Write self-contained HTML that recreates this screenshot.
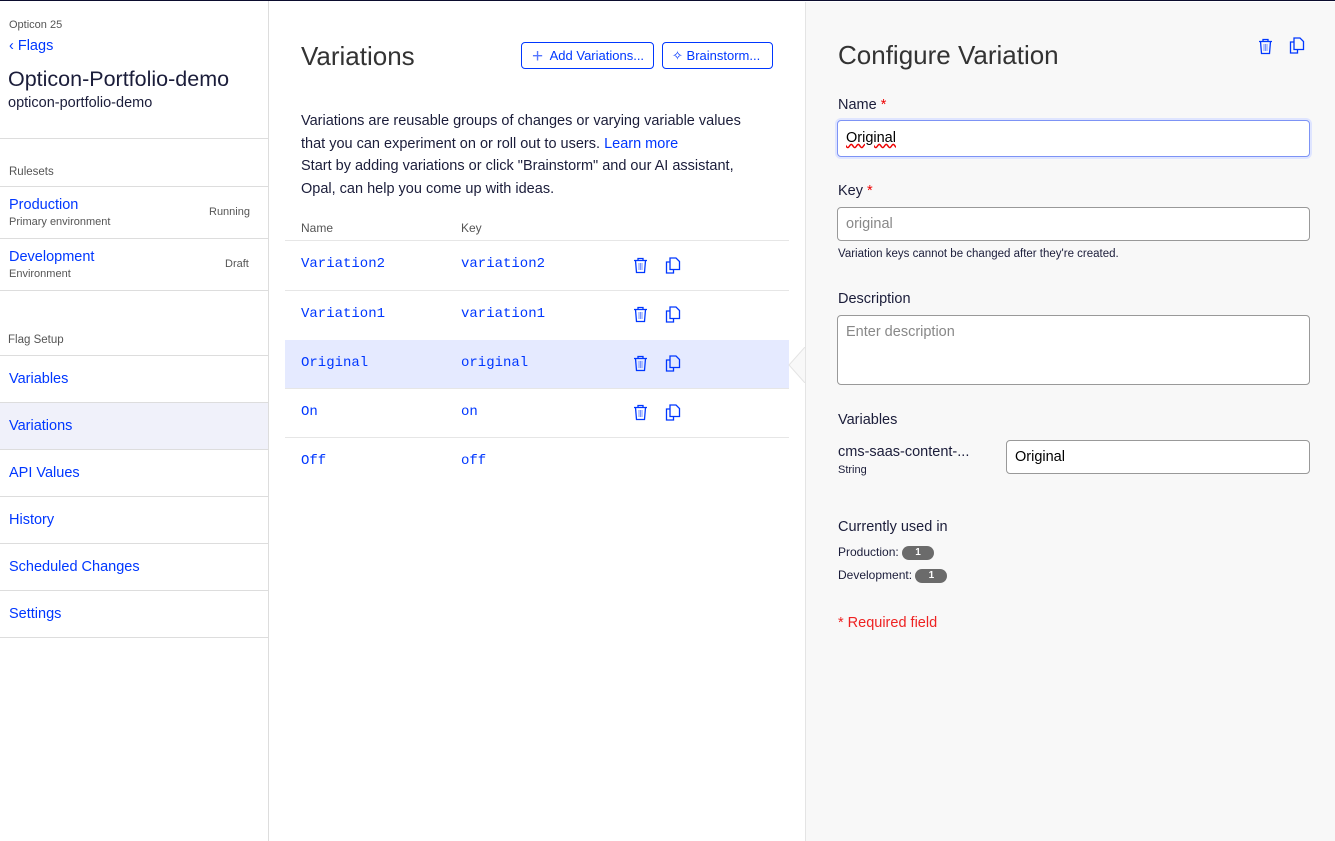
<!DOCTYPE html>
<html><head><style>
*{box-sizing:border-box;margin:0;padding:0}
body{width:1335px;height:840px;overflow:hidden;font-family:"Liberation Sans",sans-serif;color:#1b1d3a;background:#fff;position:relative;border-top:1px solid #0b0c2e}
.a{position:absolute}
.blue{color:#0037ff}
.sb{left:0;top:0;width:269px;height:840px;border-right:1px solid #ddd}
.hl{position:absolute;left:0;width:268px;border-top:1px solid #ddd}
.nav{position:absolute;left:9px;font-size:14.5px;color:#0037ff}
.mono{font-family:"Liberation Mono",monospace;font-size:14px;color:#0037ff}
.rp{left:805px;top:1px;width:530px;height:839px;background:#f8f8f8;border-left:1px solid #e4e4e4}
.lbl{font-size:14.5px}
.inp{position:absolute;background:#fff;border:1px solid #999;border-radius:4px;font-size:14.5px;padding-left:8px}
.star{color:#e00}
.badge{display:inline-block;background:#6b6b6b;color:#fff;font-size:10px;font-weight:bold;border-radius:8px;width:32px;height:14px;line-height:14px;text-align:center;vertical-align:middle}
.btn{position:absolute;top:41px;height:27px;border:1px solid #0037ff;border-radius:4px;color:#0037ff;font-size:13px;line-height:25px}
</style></head><body>
<div class="a sb">
 <div class="a" style="left:9px;top:18px;font-size:11px;color:#555">Opticon 25</div>
 <div class="a blue" style="left:9px;top:37px;font-size:14.5px">&lsaquo; Flags</div>
 <div class="a" style="left:8px;top:66px;font-size:21.5px">Opticon-Portfolio-demo</div>
 <div class="a" style="left:8px;top:94px;font-size:14.5px">opticon-portfolio-demo</div>
 <div class="hl" style="top:137px"></div>
 <div class="a" style="left:9px;top:165px;font-size:11.5px;color:#555">Rulesets</div>
 <div class="hl" style="top:185px"></div>
 <div class="nav" style="top:196px">Production</div>
 <div class="a" style="left:9px;top:215px;font-size:11px;color:#555">Primary environment</div>
 <div class="a" style="left:209px;top:205px;font-size:11px;color:#555">Running</div>
 <div class="hl" style="top:237px"></div>
 <div class="nav" style="top:248px">Development</div>
 <div class="a" style="left:9px;top:267px;font-size:11px;color:#555">Environment</div>
 <div class="a" style="left:225px;top:257px;font-size:11px;color:#555">Draft</div>
 <div class="hl" style="top:289px"></div>
 <div class="a" style="left:8px;top:333px;font-size:11.5px;color:#555">Flag Setup</div>
 <div class="hl" style="top:354px"></div>
 <div class="nav" style="top:370px">Variables</div>
 <div class="hl" style="top:401px;height:47px;background:#f0f1fa"></div>
 <div class="nav" style="top:417px">Variations</div>
 <div class="hl" style="top:448px"></div>
 <div class="nav" style="top:464px">API Values</div>
 <div class="hl" style="top:495px"></div>
 <div class="nav" style="top:511px">History</div>
 <div class="hl" style="top:542px"></div>
 <div class="nav" style="top:558px">Scheduled Changes</div>
 <div class="hl" style="top:589px"></div>
 <div class="nav" style="top:605px">Settings</div>
 <div class="hl" style="top:636px"></div>
</div>

<div class="a" style="left:301px;top:40px;font-size:26px;color:#333">Variations</div>
<div class="btn" style="left:521px;width:133px;padding-left:10px"><span style="font-size:19px;vertical-align:-2px;color:#5577ff">+</span>&nbsp; Add Variations...</div>
<div class="btn" style="left:662px;width:111px;padding-left:9px"><span style="font-size:13px">✧</span> Brainstorm...</div>
<div class="a" style="left:301px;top:109px;font-size:14.5px;line-height:22.5px;width:455px">Variations are reusable groups of changes or varying variable values that you can experiment on or roll out to users. <span class="blue">Learn more</span><br>Start by adding variations or click "Brainstorm" and our AI assistant, Opal, can help you come up with ideas.</div>
<div class="a" style="left:301px;top:220px;font-size:12px;color:#555">Name</div>
<div class="a" style="left:461px;top:220px;font-size:12px;color:#555">Key</div>
<div class="a" style="left:285px;top:239px;width:504px;border-top:1px solid #e6e6e6"></div>
<div class="a" style="left:285px;top:289px;width:504px;border-top:1px solid #e6e6e6"></div>
<div class="a" style="left:285px;top:339px;width:504px;height:48px;background:#e5eaff"></div>
<div class="a" style="left:285px;top:387px;width:504px;border-top:1px solid #e6e6e6"></div>
<div class="a" style="left:285px;top:436px;width:504px;border-top:1px solid #e6e6e6"></div>
<svg class="a" style="left:788px;top:346px" width="18" height="36"><path d="M17 0 L1 18 L17 36" fill="#f8f8f8" stroke="#e4e4e4"/></svg>

<div class="a mono" style="left:301px;top:255px">Variation2</div><div class="a mono" style="left:461px;top:255px">variation2</div>
<div class="a mono" style="left:301px;top:305px">Variation1</div><div class="a mono" style="left:461px;top:305px">variation1</div>
<div class="a mono" style="left:301px;top:354px">Original</div><div class="a mono" style="left:461px;top:354px">original</div>
<div class="a mono" style="left:301px;top:403px">On</div><div class="a mono" style="left:461px;top:403px">on</div>
<div class="a mono" style="left:301px;top:452px">Off</div><div class="a mono" style="left:461px;top:452px">off</div>

<svg width="0" height="0" style="position:absolute"><defs>
<g id="tr" fill="none" stroke="#0037ff" stroke-width="1.3"><path d="M1 3.5h13M5 3.5V1.5h5v2M2.5 3.5l1 12h8l1-12"/><path d="M6 6v7M7.5 6v7M9 6v7" stroke="#7a95ff" stroke-width="1"/></g>
<g id="cp" fill="none" stroke="#0037ff" stroke-width="1.3"><path d="M5 5H1.5v11h7v-3.5"/><path d="M5 1h6l3.5 3.5v8H5z"/></g>
</defs></svg>
<svg class="a" style="left:633px;top:256px" width="16" height="17"><use href="#tr"/></svg><svg class="a" style="left:665px;top:256px" width="17" height="17"><use href="#cp"/></svg>
<svg class="a" style="left:633px;top:305px" width="16" height="17"><use href="#tr"/></svg><svg class="a" style="left:665px;top:305px" width="17" height="17"><use href="#cp"/></svg>
<svg class="a" style="left:633px;top:354px" width="16" height="17"><use href="#tr"/></svg><svg class="a" style="left:665px;top:354px" width="17" height="17"><use href="#cp"/></svg>
<svg class="a" style="left:633px;top:403px" width="16" height="17"><use href="#tr"/></svg><svg class="a" style="left:665px;top:403px" width="17" height="17"><use href="#cp"/></svg>

<div class="a rp">
 <div class="a" style="left:32px;top:38px;font-size:26px;color:#333">Configure Variation</div>
 <svg class="a" style="left:452px;top:36px" width="16" height="17"><use href="#tr"/></svg>
 <svg class="a" style="left:483px;top:35px" width="17" height="17"><use href="#cp"/></svg>
 <div class="a lbl" style="left:32px;top:95px">Name <span class="star">*</span></div>
 <div class="inp" style="left:31px;top:118px;width:473px;height:37px;line-height:35px;border:1px solid #7d93f5;box-shadow:0 0 0 2px #dfe5ff;color:#000"><span style="text-decoration:underline wavy #e00">Original</span></div>
 <div class="a lbl" style="left:32px;top:181px">Key <span class="star">*</span></div>
 <div class="inp" style="left:31px;top:205px;width:473px;height:34px;line-height:32px;color:#888">original</div>
 <div class="a" style="left:32px;top:246px;font-size:11.5px">Variation keys cannot be changed after they're created.</div>
 <div class="a lbl" style="left:32px;top:289px">Description</div>
 <div class="inp" style="left:31px;top:313px;width:473px;height:70px;padding-top:8px;color:#888">Enter description</div>
 <div class="a lbl" style="left:32px;top:410px">Variables</div>
 <div class="a" style="left:32px;top:442px;font-size:14.5px">cms-saas-content-...</div>
 <div class="a" style="left:32px;top:462px;font-size:11px">String</div>
 <div class="inp" style="left:200px;top:438px;width:304px;height:34px;line-height:32px;color:#000">Original</div>
 <div class="a lbl" style="left:32px;top:517px">Currently used in</div>
 <div class="a" style="left:32px;top:543px;font-size:12px">Production: <span class="badge">1</span></div>
 <div class="a" style="left:32px;top:566px;font-size:12px">Development: <span class="badge">1</span></div>
 <div class="a" style="left:32px;top:613px;font-size:14.5px;color:#e22">* Required field</div>
</div>
</body></html>
